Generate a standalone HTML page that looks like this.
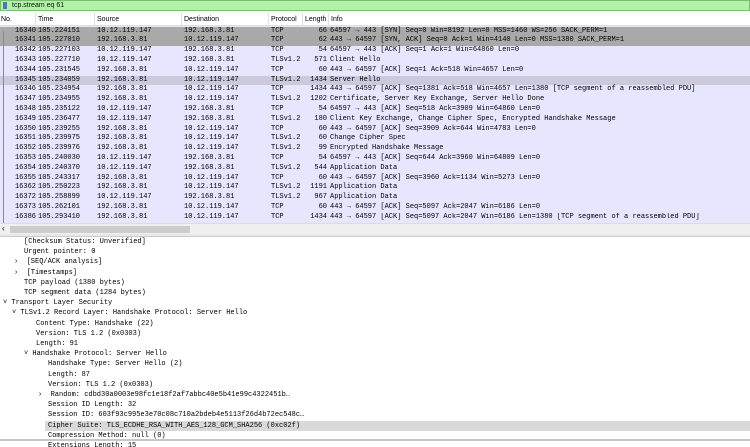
<!DOCTYPE html>
<html><head><meta charset="utf-8"><style>
*{margin:0;padding:0;box-sizing:border-box}
body{width:750px;height:447px;overflow:hidden;background:#fff;position:relative;font-family:"Liberation Mono",monospace;font-size:7px;color:#000}
.filter{position:absolute;left:0;top:0;width:750px;height:11px;background:#aff2a8;border:1px solid #7ac070}
.filter span{position:absolute;left:11px;top:1px;font-family:"Liberation Sans",sans-serif;font-size:7px;color:#111}
.filter i{position:absolute;left:2px;top:1px;width:4px;height:7px;background:#4a78b8}
.hdr{position:absolute;left:0;top:13px;width:750px;height:13px;background:#fff;border-bottom:1px solid #ddd;font-family:"Liberation Sans",sans-serif;font-size:7px}
.hdr span{position:absolute;top:3px}
.hdr b{position:absolute;top:0;width:1px;height:13px;background:#e0e0e0}
.bg{position:absolute;left:0;top:26px;width:750px;height:197px;background:#e7e6ff}
.row{position:absolute;left:0;width:750px;height:10px;background:#e7e6ff;white-space:pre;line-height:9.8px}
.row span{position:absolute;top:0}
.row .n{left:8px;width:28px;text-align:right}
.row .t{left:38px}.row .s{left:97px}.row .d{left:184px}.row .p{left:271px}
.row .l{left:300px;width:27px;text-align:right}.row .i{left:330px}
.g{background:#a9a9a9}.h{background:#cbc9db}
.sb{position:absolute;left:0;top:223px;width:750px;height:11px;background:#f0f0f0;border-top:1px solid #ddd}
.sb div{position:absolute;left:10px;top:2px;width:180px;height:7px;background:#cdcdcd}
.split{position:absolute;left:0;top:234px;width:750px;height:3px;background:#e8e8e8;border-bottom:1px solid #ccc}
.ln{position:absolute;white-space:pre;height:10.1px;line-height:10.1px}
.sel{position:absolute;left:45px;top:421px;width:705px;height:10px;background:#d9d9d9}
.bot{position:absolute;left:0;top:439px;width:750px;height:2px;background:#c8c8c8}
.br{position:absolute;left:3px;top:31px;width:1px;height:192px;background:#888}
</style></head><body>
<div class="filter"><i></i><span>tcp.stream eq 61</span></div>
<div class="hdr"><span style="left:1px">No.</span><b style="left:35px"></b><span style="left:38px">Time</span><b style="left:94px"></b><span style="left:97px">Source</span><b style="left:181px"></b><span style="left:184px">Destination</span><b style="left:268px"></b><span style="left:271px">Protocol</span><b style="left:302px"></b><span style="left:305px">Length</span><b style="left:328px"></b><span style="left:331px">Info</span></div>
<div class="bg"></div>
<div class="row g" style="top:26.5px"><span class="n">16340</span><span class="t">105.224151</span><span class="s">10.12.119.147</span><span class="d">192.168.3.81</span><span class="p">TCP</span><span class="l">66</span><span class="i">64597 → 443 [SYN] Seq=0 Win=8192 Len=0 MSS=1460 WS=256 SACK_PERM=1</span></div>
<div class="row g" style="top:36.3px"><span class="n">16341</span><span class="t">105.227010</span><span class="s">192.168.3.81</span><span class="d">10.12.119.147</span><span class="p">TCP</span><span class="l">62</span><span class="i">443 → 64597 [SYN, ACK] Seq=0 Ack=1 Win=4140 Len=0 MSS=1380 SACK_PERM=1</span></div>
<div class="row" style="top:46.1px"><span class="n">16342</span><span class="t">105.227103</span><span class="s">10.12.119.147</span><span class="d">192.168.3.81</span><span class="p">TCP</span><span class="l">54</span><span class="i">64597 → 443 [ACK] Seq=1 Ack=1 Win=64860 Len=0</span></div>
<div class="row" style="top:55.9px"><span class="n">16343</span><span class="t">105.227710</span><span class="s">10.12.119.147</span><span class="d">192.168.3.81</span><span class="p">TLSv1.2</span><span class="l">571</span><span class="i">Client Hello</span></div>
<div class="row" style="top:65.7px"><span class="n">16344</span><span class="t">105.231545</span><span class="s">192.168.3.81</span><span class="d">10.12.119.147</span><span class="p">TCP</span><span class="l">60</span><span class="i">443 → 64597 [ACK] Seq=1 Ack=518 Win=4657 Len=0</span></div>
<div class="row h" style="top:75.5px"><span class="n">16345</span><span class="t">105.234059</span><span class="s">192.168.3.81</span><span class="d">10.12.119.147</span><span class="p">TLSv1.2</span><span class="l">1434</span><span class="i">Server Hello</span></div>
<div class="row" style="top:85.3px"><span class="n">16346</span><span class="t">105.234954</span><span class="s">192.168.3.81</span><span class="d">10.12.119.147</span><span class="p">TCP</span><span class="l">1434</span><span class="i">443 → 64597 [ACK] Seq=1381 Ack=518 Win=4657 Len=1380 [TCP segment of a reassembled PDU]</span></div>
<div class="row" style="top:95.1px"><span class="n">16347</span><span class="t">105.234955</span><span class="s">192.168.3.81</span><span class="d">10.12.119.147</span><span class="p">TLSv1.2</span><span class="l">1202</span><span class="i">Certificate, Server Key Exchange, Server Hello Done</span></div>
<div class="row" style="top:104.9px"><span class="n">16348</span><span class="t">105.235122</span><span class="s">10.12.119.147</span><span class="d">192.168.3.81</span><span class="p">TCP</span><span class="l">54</span><span class="i">64597 → 443 [ACK] Seq=518 Ack=3909 Win=64860 Len=0</span></div>
<div class="row" style="top:114.7px"><span class="n">16349</span><span class="t">105.236477</span><span class="s">10.12.119.147</span><span class="d">192.168.3.81</span><span class="p">TLSv1.2</span><span class="l">180</span><span class="i">Client Key Exchange, Change Cipher Spec, Encrypted Handshake Message</span></div>
<div class="row" style="top:124.5px"><span class="n">16350</span><span class="t">105.239255</span><span class="s">192.168.3.81</span><span class="d">10.12.119.147</span><span class="p">TCP</span><span class="l">60</span><span class="i">443 → 64597 [ACK] Seq=3909 Ack=644 Win=4783 Len=0</span></div>
<div class="row" style="top:134.3px"><span class="n">16351</span><span class="t">105.239975</span><span class="s">192.168.3.81</span><span class="d">10.12.119.147</span><span class="p">TLSv1.2</span><span class="l">60</span><span class="i">Change Cipher Spec</span></div>
<div class="row" style="top:144.1px"><span class="n">16352</span><span class="t">105.239976</span><span class="s">192.168.3.81</span><span class="d">10.12.119.147</span><span class="p">TLSv1.2</span><span class="l">99</span><span class="i">Encrypted Handshake Message</span></div>
<div class="row" style="top:153.9px"><span class="n">16353</span><span class="t">105.240030</span><span class="s">10.12.119.147</span><span class="d">192.168.3.81</span><span class="p">TCP</span><span class="l">54</span><span class="i">64597 → 443 [ACK] Seq=644 Ack=3960 Win=64809 Len=0</span></div>
<div class="row" style="top:163.7px"><span class="n">16354</span><span class="t">105.240370</span><span class="s">10.12.119.147</span><span class="d">192.168.3.81</span><span class="p">TLSv1.2</span><span class="l">544</span><span class="i">Application Data</span></div>
<div class="row" style="top:173.5px"><span class="n">16355</span><span class="t">105.243317</span><span class="s">192.168.3.81</span><span class="d">10.12.119.147</span><span class="p">TCP</span><span class="l">60</span><span class="i">443 → 64597 [ACK] Seq=3960 Ack=1134 Win=5273 Len=0</span></div>
<div class="row" style="top:183.3px"><span class="n">16362</span><span class="t">105.250223</span><span class="s">192.168.3.81</span><span class="d">10.12.119.147</span><span class="p">TLSv1.2</span><span class="l">1191</span><span class="i">Application Data</span></div>
<div class="row" style="top:193.1px"><span class="n">16372</span><span class="t">105.258899</span><span class="s">10.12.119.147</span><span class="d">192.168.3.81</span><span class="p">TLSv1.2</span><span class="l">967</span><span class="i">Application Data</span></div>
<div class="row" style="top:202.9px"><span class="n">16373</span><span class="t">105.262101</span><span class="s">192.168.3.81</span><span class="d">10.12.119.147</span><span class="p">TCP</span><span class="l">60</span><span class="i">443 → 64597 [ACK] Seq=5097 Ack=2047 Win=6186 Len=0</span></div>
<div class="row" style="top:212.7px;height:10.3px;overflow:hidden"><span class="n">16386</span><span class="t">105.293410</span><span class="s">192.168.3.81</span><span class="d">10.12.119.147</span><span class="p">TCP</span><span class="l">1434</span><span class="i">443 → 64597 [ACK] Seq=5097 Ack=2047 Win=6186 Len=1380 [TCP segment of a reassembled PDU]</span></div>
<div class="br"></div>
<div class="sb"><span style="position:absolute;left:2px;top:0;font-size:8px;font-family:'Liberation Sans',sans-serif">‹</span><div></div></div>
<div class="split"></div>

<div class="sel"></div>
<div class="ln" style="left:24px;top:237px">[Checksum Status: Unverified]</div>
<div class="ln" style="left:24px;top:247.2px">Urgent pointer: 0</div>
<div class="ln" style="left:14px;top:257.4px">›  [SEQ/ACK analysis]</div>
<div class="ln" style="left:14px;top:267.6px">›  [Timestamps]</div>
<div class="ln" style="left:24px;top:277.8px">TCP payload (1380 bytes)</div>
<div class="ln" style="left:24px;top:288px">TCP segment data (1284 bytes)</div>
<div class="ln" style="left:3px;top:298.2px">˅ Transport Layer Security</div>
<div class="ln" style="left:12px;top:308.4px">˅ TLSv1.2 Record Layer: Handshake Protocol: Server Hello</div>
<div class="ln" style="left:36px;top:318.6px">Content Type: Handshake (22)</div>
<div class="ln" style="left:36px;top:328.8px">Version: TLS 1.2 (0x0303)</div>
<div class="ln" style="left:36px;top:339px">Length: 91</div>
<div class="ln" style="left:24px;top:349.2px">˅ Handshake Protocol: Server Hello</div>
<div class="ln" style="left:48px;top:359.4px">Handshake Type: Server Hello (2)</div>
<div class="ln" style="left:48px;top:369.6px">Length: 87</div>
<div class="ln" style="left:48px;top:379.8px">Version: TLS 1.2 (0x0303)</div>
<div class="ln" style="left:38px;top:390px">›  Random: cdbd30a0003e98fc1e18f2af7abbc40e5b41e99c4322451b…</div>
<div class="ln" style="left:48px;top:400.2px">Session ID Length: 32</div>
<div class="ln" style="left:48px;top:410.4px">Session ID: 603f93c995e3e70c08c710a2bdeb4e5113f26d4b72ec548c…</div>
<div class="ln" style="left:48px;top:420.6px">Cipher Suite: TLS_ECDHE_RSA_WITH_AES_128_GCM_SHA256 (0xc02f)</div>
<div class="ln" style="left:48px;top:430.8px">Compression Method: null (0)</div>
<div class="bot"></div>
<div class="ln" style="left:48px;top:441px;height:6px;overflow:hidden">Extensions Length: 15</div>
</body></html>
